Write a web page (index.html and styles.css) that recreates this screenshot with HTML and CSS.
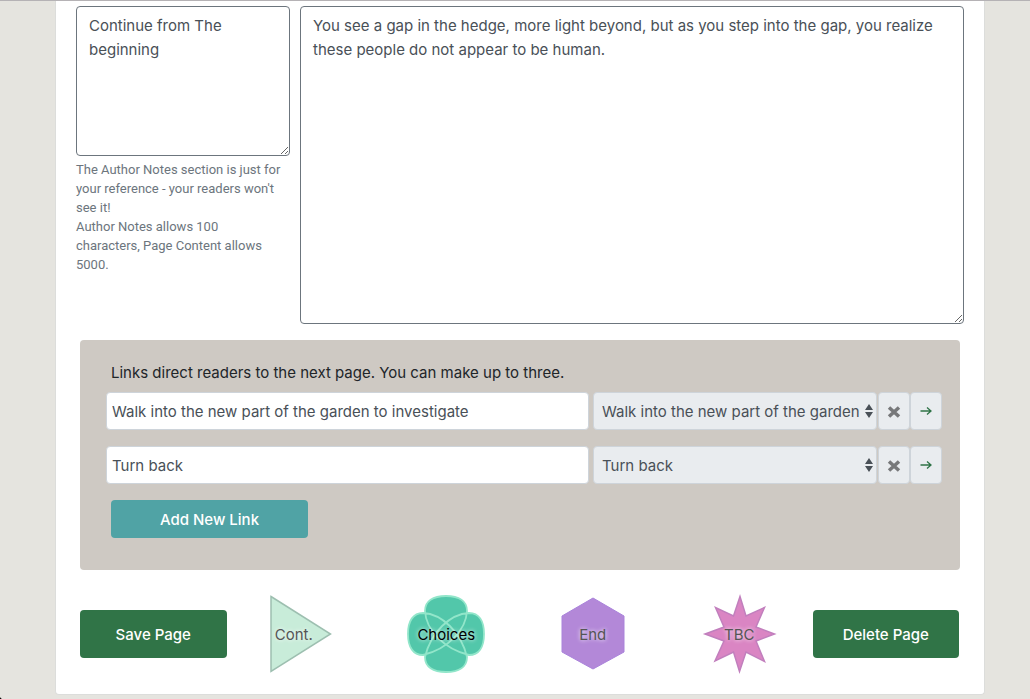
FILE: index.html
```html
<!DOCTYPE html>
<html lang="en">
<head>
<meta charset="utf-8">
<title>Edit Page</title>
<link rel="stylesheet" href="styles.css">
</head>
<body>
<main class="card">
  <form class="editor">
    <div class="fields">
      <div class="notes">
        <textarea class="area area-notes" aria-label="Author Notes" aria-describedby="notes-help">Continue from The beginning</textarea>
        <p class="help" id="notes-help">The Author Notes section is just for your reference - your readers won't see it!<br>Author Notes allows 100 characters, Page Content allows 5000.</p>
      </div>
      <textarea class="area area-content" aria-label="Page Content">You see a gap in the hedge, more light beyond, but as you step into the gap, you realize these people do not appear to be human.</textarea>
    </div>

    <section class="links">
      <p class="links-title">Links direct readers to the next page. You can make up to three.</p>
      <div class="link-row">
        <input class="link-text" type="text" aria-label="Link 1 text" value="Walk into the new part of the garden to investigate">
        <div class="picker">
          <select class="link-target" aria-label="Link 1 page"><option>Walk into the new part of the garden to investigate</option></select>
          <svg class="caret" viewBox="0 0 8 14" aria-hidden="true"><path d="M4 0l4 6H0zM4 14L0 8h8z"/></svg>
        </div>
        <div class="actions">
          <button class="icon-button" type="button" aria-label="Remove link 1"><svg class="cross" viewBox="0 0 14 14" aria-hidden="true"><path d="M2 3.500l10 9M12 3.500l-10 9"/></svg></button>
          <button class="icon-button" type="button" aria-label="Go to link 1"><svg class="arrow" viewBox="0 0 14 14" aria-hidden="true"><path d="M1.500 7h10.500M8 3.500L12 7l-4 3.500"/></svg></button>
        </div>
      </div>
      <div class="link-row">
        <input class="link-text" type="text" aria-label="Link 2 text" value="Turn back">
        <div class="picker">
          <select class="link-target" aria-label="Link 2 page"><option>Turn back</option></select>
          <svg class="caret" viewBox="0 0 8 14" aria-hidden="true"><path d="M4 0l4 6H0zM4 14L0 8h8z"/></svg>
        </div>
        <div class="actions">
          <button class="icon-button" type="button" aria-label="Remove link 2"><svg class="cross" viewBox="0 0 14 14" aria-hidden="true"><path d="M2 3.500l10 9M12 3.500l-10 9"/></svg></button>
          <button class="icon-button" type="button" aria-label="Go to link 2"><svg class="arrow" viewBox="0 0 14 14" aria-hidden="true"><path d="M1.500 7h10.500M8 3.500L12 7l-4 3.500"/></svg></button>
        </div>
      </div>
      <button class="button button-add" type="button">Add New Link</button>
    </section>

    <div class="toolbar">
      <button class="button button-main" type="submit">Save Page</button>
      <button class="shape shape-cont" type="button">
        <svg class="shape-art" viewBox="0 0 80 80" aria-hidden="true"><path d="M11 2.500L70.500 40 11 77.500z" fill="#c8ecd9" stroke="#9dbfb0" stroke-width="1.500"/></svg>
        <span class="shape-label">Cont.</span>
      </button>
      <button class="shape shape-active" type="button">
        <svg class="shape-art" viewBox="0 0 80 80" aria-hidden="true">
          <path d="M20 18h40v44H20z" fill="#52c7aa"/>
          <path d="M19 17C19 7 27 2 40 2S61 7 61 17C60 36 42 55 17 61C7 61 2 53 2 40S7 19 17 19C36 20 55 38 61 63C61 73 53 78 40 78S19 73 19 63C25 38 44 20 63 19C73 19 78 27 78 40S73 61 63 61C38 55 20 36 19 17z" fill="#52c7aa" stroke="#92e6ca" stroke-width="1.800"/>
        </svg>
        <span class="shape-label">Choices</span>
      </button>
      <button class="shape" type="button">
        <svg class="shape-art" viewBox="0 0 80 80" aria-hidden="true"><path d="M40 4L71 22v36L40 75 9 58V22z" fill="#b388d8" stroke="#aa83db" stroke-width="1"/></svg>
        <span class="shape-label">End</span>
      </button>
      <button class="shape" type="button">
        <svg class="shape-art" viewBox="0 0 80 80" aria-hidden="true"><path d="M41 2.500L47 22 65.500 13.500 57 33 75.500 40 57 47 65.500 67.500 47 58 40.500 77.500 34.500 58 16 67 25 47 6 40 25 33 16.500 13.500 34.500 22z" fill="#da85c3" stroke="#c17fbd" stroke-width="1.500"/></svg>
        <span class="shape-label">TBC</span>
      </button>
      <button class="button button-main" type="button">Delete Page</button>
    </div>
  </form>
</main>
</body>
</html>
```
FILE: styles.css
```css
* {
  box-sizing: border-box;
}

body {
  margin: 0;
  padding: 0 45px 5px 55px;
  border-top: 1px solid #b5b2b5;
  background: #e5e4df;
  color: #212529;
  font: 15px/24px Inter, "Liberation Sans", sans-serif;
}

/* Rounded corner of the window */
body::after {
  content: "";
  position: fixed;
  left: 0;
  bottom: 0;
  width: 4px;
  height: 4px;
  background: radial-gradient(circle at 100% 0, transparent 4px, #000 5px);
}

button,
input,
select,
textarea {
  margin: 0;
  font: inherit;
}

.card {
  padding: 5px 20px 20px;
  border: 1px solid #dcdddb;
  border-top: 0;
  border-radius: 0 0 4px 4px;
  background: #fff;
}

.fields {
  display: grid;
  grid-template-columns: 214fr 664fr;
  gap: 10px;
  align-items: start;
}

.area {
  display: block;
  width: 100%;
  padding: 7px 12px 6px;
  border: 1px solid #6c757d;
  border-radius: 4px;
  background: #fff;
  color: #495057;
  resize: vertical;
}

.area-notes {
  height: 150px;
}

.area-content {
  height: 318px;
}

.help {
  margin: 4px 0 0;
  padding-right: 8px;
  color: #6c757d;
  font-family: Roboto, "Liberation Sans", sans-serif;
  font-size: 13px;
  line-height: 19px;
}

.links {
  margin: 16px 4px 0;
  padding: 21px 18px 32px 26px;
  border-radius: 4px;
  background: #cec9c3;
}

.links-title {
  margin: 0 0 7px 5px;
}

.link-row {
  display: grid;
  grid-template-columns: 483fr 289fr 64px;
  margin-bottom: 16px;
}

.actions {
  display: grid;
  grid-template-columns: 1fr 1fr;
}

.link-text,
.link-target,
.icon-button {
  width: 100%;
  height: 38px;
  border: 1px solid #ced4da;
  border-radius: 4px;
  color: #495057;
}

.link-text {
  padding: 0 5px;
  background: #fff;
}

.picker {
  position: relative;
  margin: 0 1px 0 4px;
}

.link-target {
  display: block;
  padding: 2px 16px 0 8px;
  background: #e9ecef;
  appearance: none;
}

.caret {
  position: absolute;
  top: 12px;
  right: 4px;
  width: 8px;
  height: 14px;
  fill: #495057;
  pointer-events: none;
}

.icon-button {
  display: grid;
  place-items: center;
  padding: 0;
  background: #e9ecef;
}

.cross,
.arrow {
  width: 14px;
  height: 14px;
  fill: none;
}

.cross {
  stroke: #77787a;
  stroke-width: 3.5;
  overflow: visible;
}

.arrow {
  stroke: #2f7347;
  stroke-width: 1.3;
}

.button {
  padding: 2px 0 0;
  border: 0;
  border-radius: 4px;
  color: #fff;
  font-weight: 500;
  cursor: pointer;
}

.button-add {
  width: 197px;
  height: 38px;
  margin-left: 5px;
  display: block;
  background: #50a3a5;
}

.button-main {
  width: 100%;
  height: 48px;
  background: #307447;
}

.toolbar {
  display: grid;
  grid-template-columns: repeat(6, 1fr);
  align-items: center;
  margin: 24px 5px 0 4px;
}

.shape {
  display: grid;
  place-items: center;
  padding: 0;
  border: 0;
  background: none;
  color: #555;
  cursor: pointer;
}

.shape-art,
.shape-label {
  grid-area: 1 / 1;
}

.shape-art {
  width: 80px;
  height: 80px;
}

.shape-label {
  z-index: 1;
  padding-top: 2px;
  text-shadow: 0 0 4px #fff;
}

.shape-cont .shape-label {
  padding-right: 12px;
}

.shape-active {
  color: #000;
}
```
